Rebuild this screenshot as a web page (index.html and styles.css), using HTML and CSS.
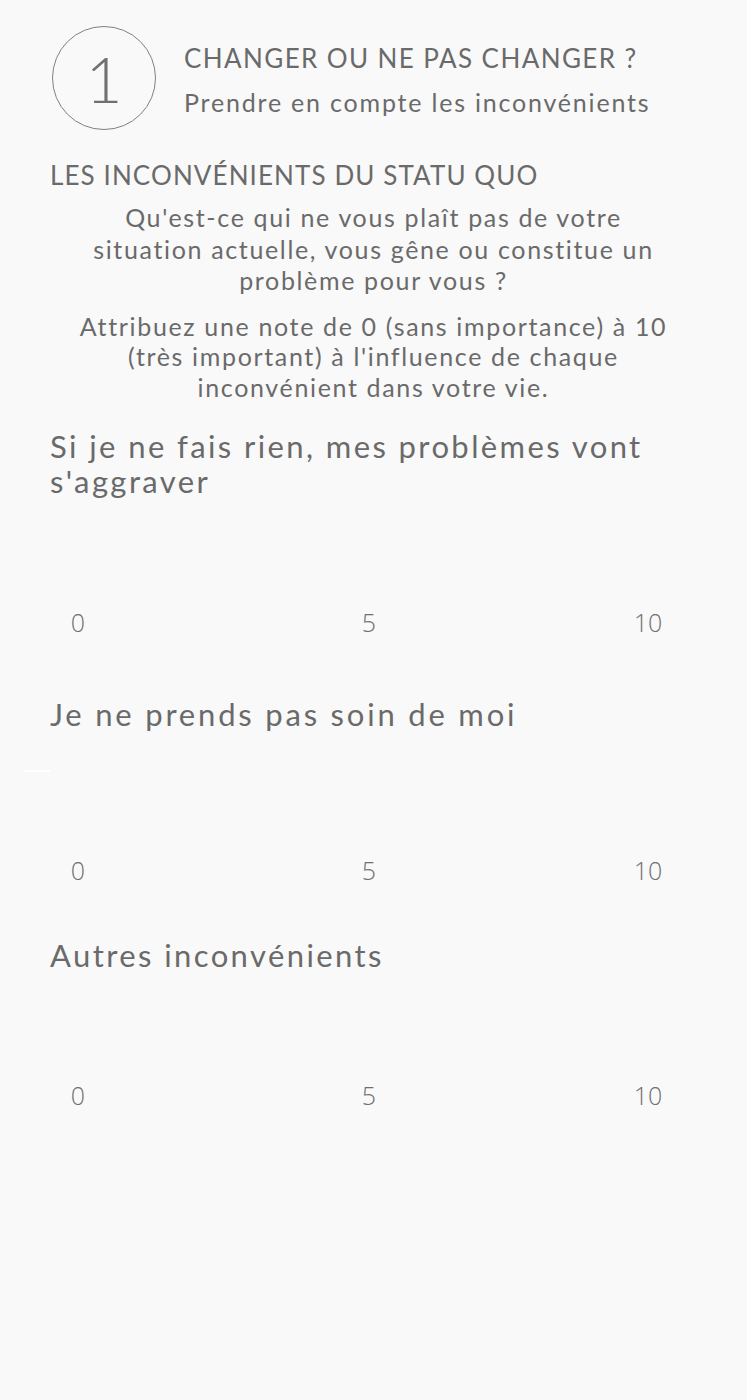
FILE: index.html
```html
<!DOCTYPE html>
<html lang="fr">
<head>
<meta charset="utf-8">
<title>Changer ou ne pas changer ?</title>
<link rel="stylesheet" href="styles.css">
</head>
<body>
<main class="page">
  <header class="step">
    <div class="step-num">1</div>
    <div class="step-text">
      <h1 class="step-title">CHANGER OU NE PAS CHANGER ?</h1>
      <p class="step-sub">Prendre en compte les inconvénients</p>
    </div>
  </header>

  <h2 class="section-title">LES INCONVÉNIENTS DU STATU QUO</h2>
  <p class="intro intro-a">Qu'est-ce qui ne vous plaît pas de votre situation actuelle, vous gêne ou constitue un problème pour vous ?</p>
  <p class="intro intro-b">Attribuez une note de 0 (sans importance) à 10 (très important) à l'influence de chaque inconvénient dans votre vie.</p>

  <section class="item item-1">
    <h3 class="item-title">Si je ne fais rien, mes problèmes vont s'aggraver</h3>
    <div class="scale"><span class="s0">0</span><span class="s5">5</span><span class="s10">10</span></div>
  </section>

  <section class="item item-2">
    <h3 class="item-title">Je ne prends pas soin de moi</h3>
    <div class="track"></div>
    <div class="scale"><span class="s0">0</span><span class="s5">5</span><span class="s10">10</span></div>
  </section>

  <section class="item item-3">
    <h3 class="item-title">Autres inconvénients</h3>
    <div class="scale"><span class="s0">0</span><span class="s5">5</span><span class="s10">10</span></div>
  </section>
</main>
</body>
</html>
```
FILE: styles.css
```css
html, body {
  margin: 0;
  padding: 0;
  background: #f9f9f9;
}
body {
  font-family: "Lato", "Noto Sans", "DejaVu Sans", sans-serif;
  color: #6a6a6a;
  width: 747px;
  min-height: 1400px;
}
.page {
  padding: 26px 0 0 0;
}
h1, h2, h3, p { margin: 0; font-weight: 400; }

.step {
  display: flex;
  align-items: flex-start;
  padding-left: 52px;
}
.step-num {
  width: 102px;
  height: 102px;
  border: 1px solid #808080;
  border-radius: 50%;
  display: flex;
  align-items: center;
  justify-content: center;
  font-family: "Lato", sans-serif;
  font-weight: 300;
  font-size: 64px;
  color: #707070;
  flex: none;
}
.step-text {
  padding-left: 28px;
  padding-top: 14px;
}
.step-title {
  font-size: 26px;
  line-height: 36px;
  letter-spacing: 1.4px;
}
.step-sub {
  font-size: 25px;
  line-height: 36px;
  letter-spacing: 1.8px;
  margin-top: 8px;
}

.section-title {
  font-size: 26px;
  line-height: 30px;
  letter-spacing: 1.1px;
  padding-left: 50px;
  margin-top: 30px;
}
.intro {
  font-size: 25px;
  text-align: center;
  letter-spacing: 1.65px;
  padding: 0 74px;
}
.intro-a {
  line-height: 31.5px;
  margin-top: 12px;
}
.intro-b {
  line-height: 30.5px;
  margin-top: 14px;
}

.item { padding: 0 50px; }
.item-title {
  font-size: 31px;
  line-height: 35px;
  letter-spacing: 2.4px;
}
.item-2 .item-title { letter-spacing: 2.8px; }
.item-1 { margin-top: 27px; }
.item-2 { margin-top: 60px; }
.item-3 { margin-top: 53px; }

.scale {
  display: grid;
  grid-template-columns: 60px 1fr 60px;
  margin-left: -2px;
  margin-right: 19px;
  font-family: "Open Sans", sans-serif;
  font-weight: 300;
  font-size: 25px;
  line-height: 30px;
  color: #707070;
  text-align: center;
}
.s5 { padding-left: 12px; }
.item-1 .scale { margin-top: 108px; }
.item-2 .scale { margin-top: 83px; }
.item-3 .scale { margin-top: 107px; }

.track {
  width: 26px;
  height: 2px;
  background: #ffffff;
  margin-left: -26px;
  margin-top: 38px;
}
```
